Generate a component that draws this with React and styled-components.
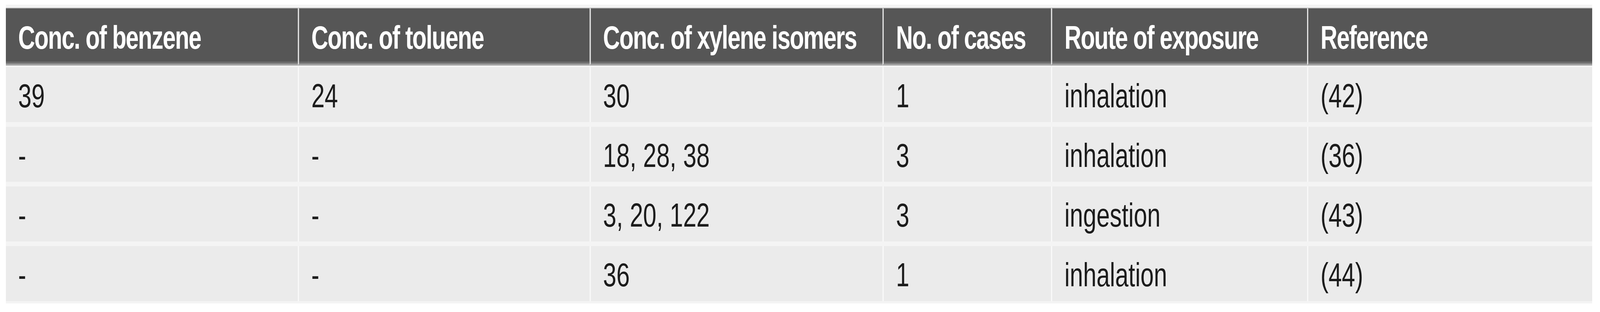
import React from 'react';
import styled, { createGlobalStyle } from 'styled-components';

// the reference is laid out on a 5736 x 800 canvas; the window may be narrower
const DESIGN_WIDTH = 5736;

const GlobalStyle = createGlobalStyle`
  html, body {
    margin: 0;
    background: #fff;
    overflow: hidden;
    font-family: 'Liberation Sans', Arial, sans-serif;
  }
`;

const COLUMNS = '1047px 1046px 1050px 604px 918px 1022px';

const Stage = styled.div`
  width: ${DESIGN_WIDTH}px;
  height: 800px;
  box-sizing: border-box;
  padding: 12px 0 0 21px;
  transform-origin: 0 0;
`;

const Table = styled.div`
  width: 5687px;
  display: flex;
  flex-direction: column;
  background: #f4f4f4;
  padding: 8px 0 6px;
`;

const Row = styled.div`
  display: grid;
  grid-template-columns: ${COLUMNS};
  height: ${(p) => (p.head ? '148px' : '141px')};
  margin-bottom: ${(p) => (p.head ? '4px' : '12px')};
  &:last-child {
    margin-bottom: 0;
  }
`;

const Cell = styled.div`
  box-sizing: border-box;
  display: flex;
  align-items: center;
  padding: 6px 0 0 44px;
  border-left: ${(p) => (p.first ? 'none' : '4px solid #fafafa')};
  background: #ebebeb;
  color: #1c1c1c;
  font-size: 86px;
  white-space: nowrap;
`;

const HeadCell = styled(Cell)`
  padding-top: 7px;
  background: #565656;
  color: #fff;
  font-weight: 700;
  font-size: 84px;
  letter-spacing: -2.5px;
  border-top: 2px solid #9c9c9c;
  border-bottom: 5px solid #a0a0a0;
  box-shadow: inset 0 -5px 0 #6e6e6e;
  border-left: ${(p) => (p.first ? 'none' : '4px solid #ececec')};
`;

const headers = [
  'Conc. of benzene',
  'Conc. of toluene',
  'Conc. of xylene isomers',
  'No. of cases',
  'Route of exposure',
  'Reference',
];

const rows = [
  ['39', '24', '30', '1', 'inhalation', '(42)'],
  ['-', '-', '18, 28, 38', '3', 'inhalation', '(36)'],
  ['-', '-', '3, 20, 122', '3', 'ingestion', '(43)'],
  ['-', '-', '36', '1', 'inhalation', '(44)'],
];

const App = () => {
  const scale = Math.min(1, window.innerWidth / DESIGN_WIDTH);
  return (
    <Stage style={{ transform: `scaleX(${scale})` }}>
      <GlobalStyle />
      <Table>
        <Row head>
          {headers.map((h, i) => (
            <HeadCell key={h} first={i === 0}>{h}</HeadCell>
          ))}
        </Row>
        {rows.map((r, ri) => (
          <Row key={ri}>
            {r.map((c, ci) => (
              <Cell key={ci} first={ci === 0}>{c}</Cell>
            ))}
          </Row>
        ))}
      </Table>
    </Stage>
  );
};

export default App;
